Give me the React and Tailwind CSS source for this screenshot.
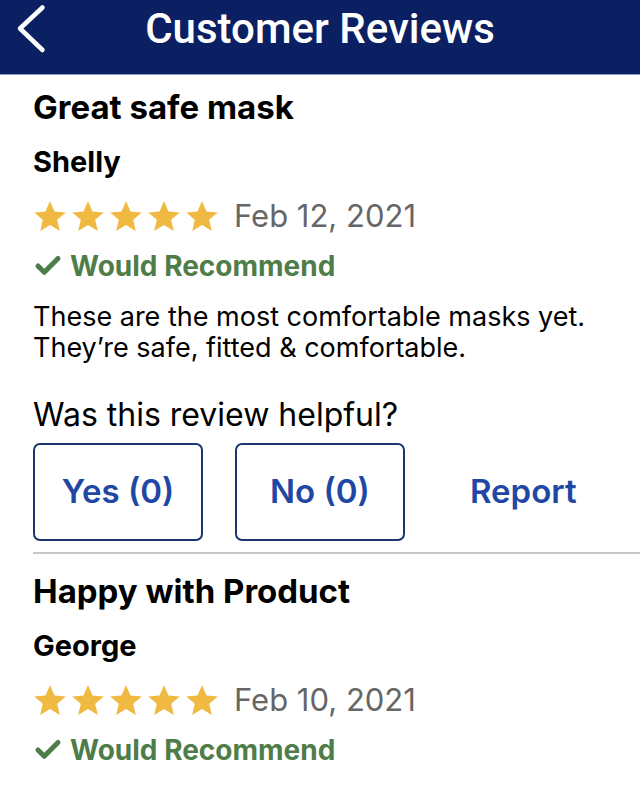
import { Check } from 'lucide-react';

const reviews = [
  {
    title: 'Great safe mask',
    name: 'Shelly',
    date: 'Feb 12, 2021',
    body: ['These are the most comfortable masks yet.', 'They\u2019re safe, fitted & comfortable.'],
  },
  {
    title: 'Happy with Product',
    name: 'George',
    date: 'Feb 10, 2021',
  },
];

function Star() {
  return (
    <svg viewBox="1.25 1.8 21.5 20.4" className="h-[30px] w-[32px] shrink-0">
      <path d="M12 1.8l3.05 7.1 7.7.66-5.85 5.07 1.76 7.53L12 18.2l-6.66 3.96 1.76-7.53L1.25 9.56l7.7-.66z" fill="#f0b941" />
    </svg>
  );
}

function Review({ review, first }) {
  return (
    <div className={first ? 'pl-[33px] pt-[12px]' : 'pl-[33px] pt-[17px]'}>
      <h2 className="text-[33px] font-bold leading-[40px] text-black">{review.title}</h2>
      <p className="mt-[17px] text-[29px] font-bold leading-[36px] text-black">{review.name}</p>
      <div className="mt-[17px] flex items-center">
        <div className="flex gap-[6px] pl-[1px]">
          {[0, 1, 2, 3, 4].map(i => <Star key={i} />)}
        </div>
        <span className="ml-[16px] text-[31px] leading-[38px] text-[#666666]">{review.date}</span>
      </div>
      <div className="mt-[14px] flex items-center gap-[7px] text-[#4f7d49]">
        <Check size={30} strokeWidth={4} />
        <span className="text-[28px] font-bold leading-[34px]">Would Recommend</span>
      </div>
      {review.body && (
        <>
          <div className="mt-[18px] text-[27px] leading-[31px] text-black">
            {review.body.map(line => <p key={line}>{line}</p>)}
          </div>
          <p className="mt-[33px] text-[32px] leading-[38px] text-black">Was this review helpful?</p>
          <div className="mt-[9px] flex items-center">
            <button className="h-[98px] w-[170px] rounded-[7px] border-2 border-[#1b3472] text-[33px] font-semibold text-[#1f47a3]">Yes (0)</button>
            <button className="ml-[32px] h-[98px] w-[170px] rounded-[7px] border-2 border-[#1b3472] text-[33px] font-semibold text-[#1f47a3]">No (0)</button>
            <button className="ml-[65px] text-[33px] font-semibold text-[#1f47a3]">Report</button>
          </div>
          <div className="mt-[11px] h-[2px] bg-[#c8c8c8]" />
        </>
      )}
    </div>
  );
}

export default function App() {
  return (
    <div className="h-[796px] w-[640px] overflow-hidden bg-white" style={{ fontFamily: 'Inter, "Liberation Sans", sans-serif' }}>
      <header className="relative flex h-[75px] justify-center border-b border-[#8e9cc4] bg-[#0b1f63] pt-[4px]">
        <button className="absolute left-0 top-0">
          <svg viewBox="0 0 60 60" className="h-[60px] w-[60px]">
            <path d="M42.5 7.5L20 28.5l22.5 21.5" fill="none" stroke="white" strokeWidth="4.5" strokeLinecap="round" strokeLinejoin="round" />
          </svg>
        </button>
        <h1 className="text-[42px] font-medium leading-[50px] text-white" style={{ fontFamily: 'Roboto, "Liberation Sans", sans-serif' }}>Customer Reviews</h1>
      </header>
      {reviews.map((r, i) => <Review key={r.title} review={r} first={i === 0} />)}
    </div>
  );
}
